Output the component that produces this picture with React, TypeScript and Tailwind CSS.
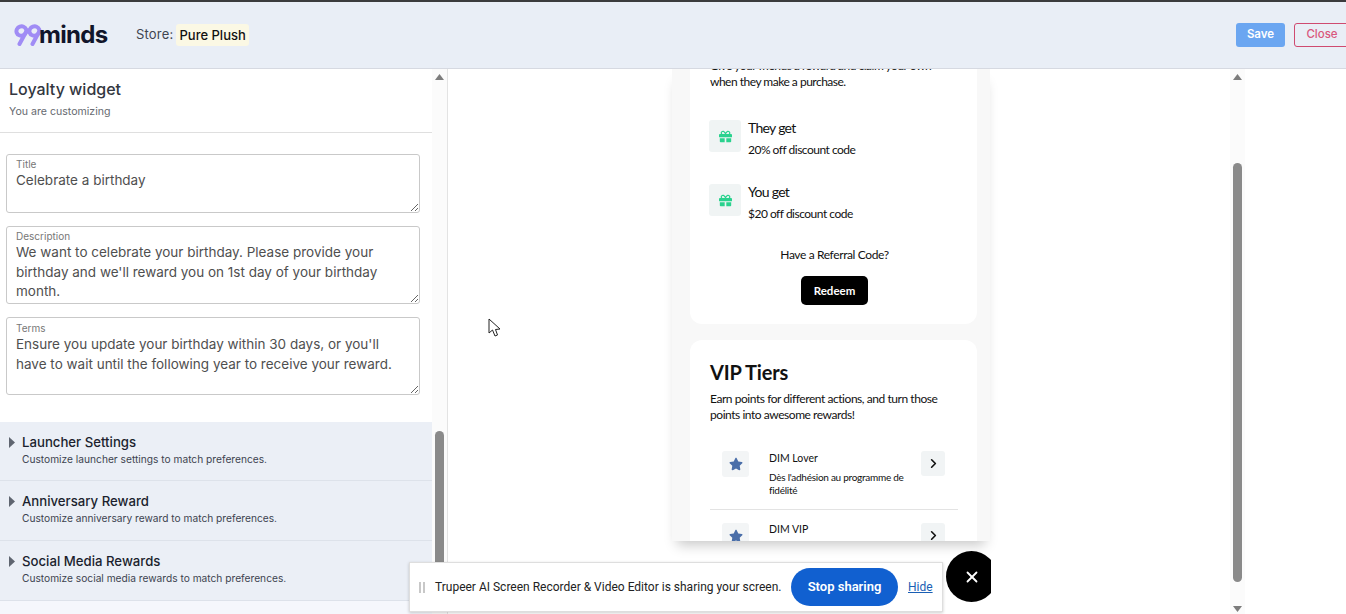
import React from 'react';
import { ChevronRight, X } from 'lucide-react';
import { FaGift, FaStar } from 'react-icons/fa';

const Logo: React.FC = () => (
  <div className="flex items-center w-[93px]">
    <svg width="30" height="22" viewBox="0 0 30 22" fill="none" stroke="#a08cf5" strokeWidth="4" strokeLinecap="round" className="shrink-0">
      <ellipse cx="7.4" cy="7" rx="5" ry="4.6" transform="rotate(-20 7.4 7)" />
      <path d="M12 8 L5.5 20" />
      <ellipse cx="20.4" cy="7" rx="5" ry="4.6" transform="rotate(-20 20.4 7)" />
      <path d="M25 8 L18.5 20" />
    </svg>
    <span className="text-[24px] leading-none font-bold text-[#11152a] tracking-[-0.7px] ml-[-5px] font-['Inter',sans-serif]">minds</span>
  </div>
);

const Field: React.FC<{ label: string; value: string; height: string; labelTop?: string; textTop?: string }> = ({
  label,
  value,
  height,
  labelTop = 'top-[4px]',
  textTop = 'pt-[16px]',
}) => (
  <div className={`relative ${height}`}>
    <span className={`absolute left-[10px] ${labelTop} text-[10px] leading-[13px] text-[#777]`}>{label}</span>
    <textarea
      readOnly
      defaultValue={value}
      className={`block w-full h-full ${textTop} pl-[9px] pr-[4px] border border-[#c9c9c9] rounded-[3px] text-[13.5px] leading-[19.5px] text-[#4f4f4f] bg-white resize-y outline-none overflow-hidden`}
    />
  </div>
);

const AccordionRow: React.FC<{ title: string; text: string; height: string }> = ({ title, text, height }) => (
  <div className={`flex ${height} border-b border-[#dde2ea] pl-[9px] pt-[12px]`}>
    <svg width="6" height="11" viewBox="0 0 6 11" className="mt-[3px] mr-[7px] shrink-0">
      <path d="M0 0 L6 5.5 L0 11 Z" fill="#5f6570" />
    </svg>
    <div>
      <div className="text-[13.2px] leading-[17px] font-medium text-[#1b1f2e]">{title}</div>
      <div className="text-[10.2px] leading-[14px] mt-[1px] text-[#3d4350]">{text}</div>
    </div>
  </div>
);

const Scrollbar: React.FC<{ thumb: string }> = ({ thumb }) => (
  <div className="w-[15px] shrink-0 flex flex-col items-center bg-[#fbfbfb]">
    <svg width="9" height="6" viewBox="0 0 9 6" className="mt-[5px] shrink-0">
      <path d="M4.5 0 L9 6 L0 6 Z" fill="#7c7c7c" />
    </svg>
    <div className={`w-[9px] rounded-full bg-[#8a8a8a] ${thumb}`} />
    <div className="flex-1" />
    <svg width="9" height="6" viewBox="0 0 9 6" className="mb-[2px] shrink-0">
      <path d="M0 0 L9 0 L4.5 6 Z" fill="#7c7c7c" />
    </svg>
  </div>
);

const Reward: React.FC<{ title: string; text: string }> = ({ title, text }) => (
  <div className="flex h-[64px] ml-[-1px]">
    <div className="w-[32px] h-[32px] rounded-[3px] bg-[#f0f4f4] flex items-center justify-center shrink-0">
      <FaGift className="text-[#2ad28e] text-[13px]" />
    </div>
    <div className="ml-[7px] mt-[-1px]">
      <div className="text-[14px] leading-[18px] tracking-[-0.7px] text-[#111]">{title}</div>
      <div className="text-[12px] leading-[15px] tracking-[-0.5px] mt-[5px] text-[#111]">{text}</div>
    </div>
  </div>
);

const TierIcon: React.FC = () => (
  <div className="w-[27px] h-[26px] rounded-[3px] bg-[#f3f5f6] flex items-center justify-center shrink-0">
    <FaStar className="text-[#4a6ea9] text-[14px]" />
  </div>
);

const TierArrow: React.FC = () => (
  <div className="w-[24px] h-[25px] rounded-[3px] bg-[#f1f4f5] flex items-center justify-center shrink-0">
    <ChevronRight size={15} strokeWidth={2.6} className="text-[#111]" />
  </div>
);

const App: React.FC = () => (
  <div className="relative h-screen w-full overflow-hidden flex flex-col bg-white font-['Inter',sans-serif]">
    <header className="h-[69px] shrink-0 flex items-center justify-between bg-[#e9eef6] border-t-2 border-t-[#3b3b3d] border-b border-b-[#d6d9e1] pl-[14px]">
      <div className="flex items-center">
        <Logo />
        <span className="ml-[29px] text-[13px] tracking-[0.2px] text-[#3f4450]">Store:</span>
        <span className="ml-[3px] px-[3px] h-[22px] leading-[23px] rounded-[3px] bg-[#fbf8e4] text-[13px] font-medium text-[#111]">Pure Plush</span>
      </div>
      <div className="flex items-center gap-[9px] mr-[-4px]">
        <button className="w-[49px] h-[24px] rounded-[3px] bg-[#6ba6f1] text-white text-[11.5px] font-semibold">Save</button>
        <button className="w-[56px] h-[24px] rounded-[3px] border border-[#cf4a70] text-[#d9577d] text-[11.5px] font-medium">Close</button>
      </div>
    </header>

    <div className="flex flex-1 min-h-0">
      <aside className="w-[448px] shrink-0 flex border-r border-[#e3e3e3]">
        <div className="w-[432px] shrink-0 flex flex-col">
          <div className="h-[64px] border-b border-[#dfdfdf] pl-[9px] pt-[10px]">
            <h2 className="text-[16px] leading-[21px] font-medium text-[#33373f]">Loyalty widget</h2>
            <p className="text-[10.6px] leading-[15px] mt-[4px] text-[#666a70]">You are customizing</p>
          </div>
          <div className="flex flex-col gap-[13px] pl-[6px] pr-[12px] pt-[21px]">
            <Field label="Title" value="Celebrate a birthday" height="h-[59px]" />
            <Field
              label="Description"
              value={"We want to celebrate your birthday. Please provide your\nbirthday and we'll reward you on 1st day of your birthday\nmonth."}
              height="h-[78px]"
            />
            <Field
              label="Terms"
              value={"Ensure you update your birthday within 30 days, or you'll\nhave to wait until the following year to receive your reward."}
              height="h-[78px]"
              labelTop="top-[5px]"
              textTop="pt-[17px]"
            />
          </div>
          <div className="mt-[27px] flex-1 bg-[#f5f7fc]">
            <div className="bg-[#ebeff6]">
              <AccordionRow height="h-[59px]" title="Launcher Settings" text="Customize launcher settings to match preferences." />
              <AccordionRow height="h-[60px]" title="Anniversary Reward" text="Customize anniversary reward to match preferences." />
              <AccordionRow height="h-[60px]" title="Social Media Rewards" text="Customize social media rewards to match preferences." />
            </div>
          </div>
        </div>
        <Scrollbar thumb="mt-[351px] h-[170px] shrink-0" />
      </aside>

      <main className="w-[782px] shrink-0 min-h-0 overflow-hidden pl-[224px]">
        <div className="w-[318px] h-[472px] overflow-hidden bg-[#f8f8f8] shadow-[0_9px_12px_-5px_rgba(0,0,0,0.22)] pl-[18px] font-['Lato',sans-serif]">
          <section className="w-[287px] h-[266px] mt-[-11px] bg-white rounded-b-[12px] pl-[20px] pr-[18px]">
            <p className="text-[12px] leading-[16px] tracking-[-0.5px] text-[#111] whitespace-nowrap">Give your friends a reward and claim your own<br />when they make a purchase.</p>
            <div className="mt-[30px]">
              <Reward title="They get" text="20% off discount code" />
              <Reward title="You get" text="$20 off discount code" />
            </div>
            <p className="text-center text-[12px] leading-[15px] tracking-[-0.38px] text-[#111] mt-[-1px]">Have a Referral Code?</p>
            <div className="flex justify-center mt-[14px]">
              <button className="w-[67px] h-[29px] rounded-[5px] bg-black text-white text-[11.5px] font-bold">Redeem</button>
            </div>
          </section>
          <section className="w-[287px] h-[300px] mt-[16px] bg-white rounded-[12px] pl-[20px] pr-[19px] pt-[19px]">
            <h3 className="text-[20px] leading-[26px] font-bold tracking-[-0.2px] text-[#111]">VIP Tiers</h3>
            <p className="text-[12px] leading-[16px] tracking-[-0.45px] text-[#111] mt-[6px] whitespace-nowrap">Earn points for different actions, and turn those<br />points into awesome rewards!</p>
            <div className="mt-[28px] flex border-b border-[#e3e3e3] h-[59px] pl-[12px] pr-[13px]">
              <TierIcon />
              <div className="ml-[20px] flex-1">
                <div className="text-[10.5px] leading-[13px] text-[#111] mt-[1px]">DIM Lover</div>
                <div className="text-[10px] leading-[13px] tracking-[-0.27px] text-[#111] mt-[6px]">Dès l'adhésion au programme de<br />fidélité</div>
              </div>
              <TierArrow />
            </div>
            <div className="mt-[13px] flex pl-[12px] pr-[13px]">
              <TierIcon />
              <div className="ml-[20px] flex-1 text-[10.5px] leading-[13px] text-[#111]">DIM VIP</div>
              <TierArrow />
            </div>
          </section>
        </div>
      </main>

      <Scrollbar thumb="mt-[83px] h-[419px] shrink-0" />
    </div>

    {/* pointer captured in the recording */}
    <svg width="14" height="20" viewBox="0 0 14 20" className="absolute left-[488px] top-[318px]">
      <path d="M1 1 L1 15 L4.5 12 L7 18 L9.5 17 L7.5 11.5 L12 11 Z" fill="#fff" stroke="#222" strokeWidth="1" strokeLinejoin="round" />
    </svg>

    {/* browser screen share bar */}
    <div className="absolute left-[409px] top-[562px] w-[534px] h-[50px] flex items-center bg-white border border-[#dedede] shadow-[0_1px_3px_rgba(0,0,0,0.2)] pl-[9px] font-['Roboto',sans-serif]">
      <div className="flex gap-[2px] mr-[10px]">
        <span className="w-[2px] h-[11px] bg-[#c8c8c8]" />
        <span className="w-[2px] h-[11px] bg-[#c8c8c8]" />
      </div>
      <span className="w-[346px] shrink-0 text-[12px] text-[#222] whitespace-nowrap">Trupeer AI Screen Recorder &amp; Video Editor is sharing your screen.</span>
      <button className="ml-[10px] w-[107px] h-[38px] rounded-full bg-[#1160d0] text-white text-[13px] font-semibold shrink-0">Stop sharing</button>
      <a className="ml-[10px] text-[12px] text-[#1a5fb4] underline">Hide</a>
    </div>

    {/* floating launcher, clipped by the widget frame */}
    <div className="absolute left-[946px] top-[551px] w-[45px] h-[52px] overflow-hidden">
      <div className="w-[51px] h-[51px] rounded-full bg-black flex items-center justify-center">
        <X size={18} strokeWidth={2.4} className="text-white" />
      </div>
    </div>
  </div>
);

export default App;
